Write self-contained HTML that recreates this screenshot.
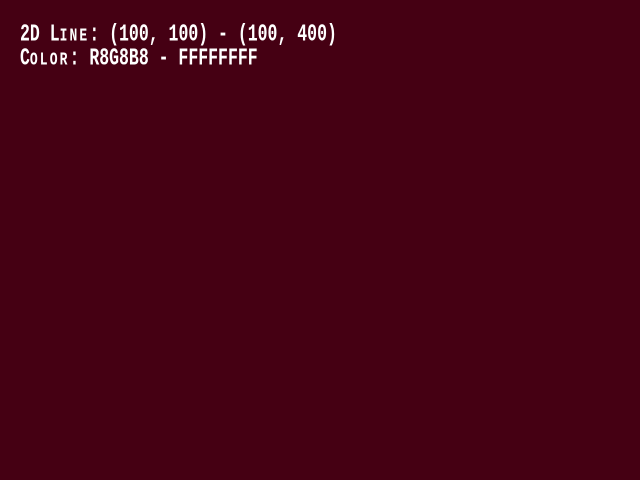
<!DOCTYPE html>
<html><head><style>
html,body{margin:0;padding:0;width:640px;height:480px;background:#450013;overflow:hidden}
.t{position:absolute;left:20px;color:#fff;font-family:"Liberation Mono",monospace;font-weight:bold;font-size:16.5px;line-height:16px;white-space:pre;transform-origin:0 0;transform:scaleY(1.45);letter-spacing:0}
.s{font-size:13px;letter-spacing:2.1px}
</style></head><body>
<div class="t" style="top:23px">2D L<span class="s">INE</span>: (100, 100) - (100, 400)</div>
<div class="t" style="top:47px">C<span class="s">OLOR</span>: R8G8B8 - FFFFFFFF</div>
</body></html>
